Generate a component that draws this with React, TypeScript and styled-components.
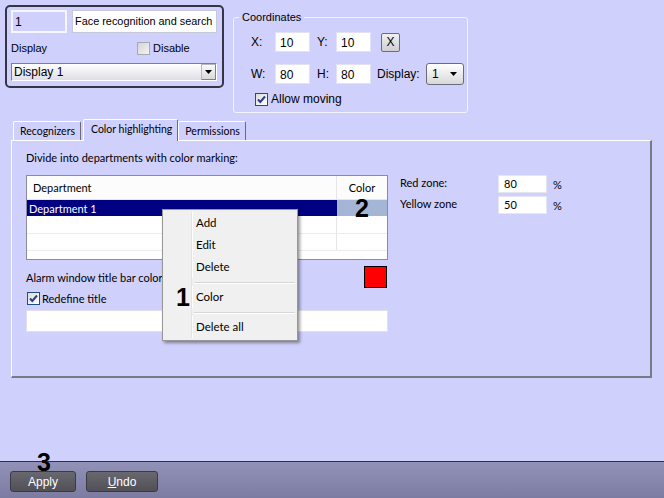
import React from 'react';
import styled, { createGlobalStyle } from 'styled-components';

const classic = `"Liberation Sans", Arial, sans-serif`;
const ui = `Lato, "Open Sans", sans-serif`;

const GlobalStyle = createGlobalStyle`
  html, body {
    margin: 0;
    padding: 0;
  }
  body {
    background: #d0d0fc;
    font-family: ${classic};
    font-size: 11px;
    color: #000;
  }
`;

const Check = ({ checked, disabled }: { checked?: boolean; disabled?: boolean }) => (
  <CheckBox $disabled={disabled}>
    {checked && (
      <svg width="11" height="11" viewBox="0 0 11 11">
        <path d="M2 5.5 L4.3 8 L9 2.5" fill="none" stroke="#2a3f8c" strokeWidth="2" />
      </svg>
    )}
  </CheckBox>
);

const Triangle = () => (
  <svg width="7" height="4" viewBox="0 0 7 4">
    <path d="M0 0 H7 L3.5 4 Z" fill="#000" />
  </svg>
);

const App = () => (
  <>
    <GlobalStyle />
    <Page>
      <Main>
        <TopRow>
          <ObjectPanel>
            <FieldRow>
              <IdField>1</IdField>
              <NameField>Face recognition and search 1</NameField>
            </FieldRow>
            <DisplayRow>
              <DisplayLabel>Display</DisplayLabel>
              <CheckRow>
                <Check disabled />
                <span>Disable</span>
              </CheckRow>
            </DisplayRow>
            <DisplaySelect>
              <span>Display 1</span>
              <ArrowButton>
                <Triangle />
              </ArrowButton>
            </DisplaySelect>
          </ObjectPanel>

          <Coordinates>
            <Legend>Coordinates</Legend>
            <CoordRow>
              <CoordLabel $w={24}>X:</CoordLabel>
              <NumField>10</NumField>
              <CoordLabel $w={26} $pl={7}>Y:</CoordLabel>
              <NumField>10</NumField>
              <ResetButton>X</ResetButton>
            </CoordRow>
            <CoordRow $mt={10}>
              <CoordLabel $w={24}>W:</CoordLabel>
              <NumField>80</NumField>
              <CoordLabel $w={26} $pl={7}>H:</CoordLabel>
              <NumField>80</NumField>
              <CoordLabel $w={55} $pl={6}>Display:</CoordLabel>
              <SmallSelect>
                <span>1</span>
                <Triangle />
              </SmallSelect>
            </CoordRow>
            <MovingRow>
              <Check checked />
              <span>Allow moving</span>
            </MovingRow>
          </Coordinates>
        </TopRow>

        <TabStrip>
          <Tab>Recognizers</Tab>
          <Tab $active>Color highlighting</Tab>
          <Tab>Permissions</Tab>
        </TabStrip>

        <TabPanel>
          <LeftColumn>
            <Caption>Divide into departments with color marking:</Caption>
            <Table>
              <HeaderRow>
                <DeptCell>Department</DeptCell>
                <ColorCell>Color</ColorCell>
              </HeaderRow>
              <DataRow $selected>
                <DeptCell $selected>Department 1</DeptCell>
                <ColorCell $swatch>
                  <Callout>2</Callout>
                </ColorCell>
              </DataRow>
              <DataRow>
                <DeptCell />
                <ColorCell />
              </DataRow>
              <DataRow>
                <DeptCell />
                <ColorCell />
              </DataRow>
            </Table>
            <AlarmRow>
              <span>Alarm window title bar color:</span>
              <Swatch />
            </AlarmRow>
            <RedefineRow>
              <Check checked />
              <span>Redefine title</span>
            </RedefineRow>
            <TitleField />
          </LeftColumn>

          <ZoneColumn>
            <ZoneRow>
              <ZoneLabel>Red zone:</ZoneLabel>
              <ZoneField>80</ZoneField>
              <Percent>%</Percent>
            </ZoneRow>
            <ZoneRow>
              <ZoneLabel>Yellow zone</ZoneLabel>
              <ZoneField>50</ZoneField>
              <Percent>%</Percent>
            </ZoneRow>
          </ZoneColumn>
        </TabPanel>
      </Main>

      <BottomBar>
        <BarButton $w={66}>Apply</BarButton>
        <BarButton $w={72}>
          <u>U</u>ndo
        </BarButton>
      </BottomBar>

      <ContextMenu>
        <MenuItem>
          <Gutter />
          <span>Add</span>
        </MenuItem>
        <MenuItem>
          <Gutter />
          <span>Edit</span>
        </MenuItem>
        <MenuItem>
          <Gutter />
          <span>Delete</span>
        </MenuItem>
        <MenuSeparator />
        <MenuItem>
          <Gutter>
            <Callout>1</Callout>
          </Gutter>
          <span>Color</span>
        </MenuItem>
        <MenuSeparator />
        <MenuItem>
          <Gutter />
          <span>Delete all</span>
        </MenuItem>
      </ContextMenu>

      <StepMark>3</StepMark>
    </Page>
  </>
);

const Page = styled.div`
  position: relative;
  width: 664px;
  height: 498px;
  display: flex;
  flex-direction: column;
  overflow: hidden;
`;

const Main = styled.div`
  flex: 1;
`;

const TopRow = styled.div`
  display: flex;
  align-items: flex-start;
  gap: 9px;
  padding: 5px 0 0 5px;
`;

const ObjectPanel = styled.div`
  box-sizing: border-box;
  width: 219px;
  height: 83px;
  border: 2px solid #353545;
  border-radius: 5px;
  padding: 3px 5px 0 4px;
`;

const FieldRow = styled.div`
  display: flex;
  gap: 5px;
`;

const IdField = styled.div`
  box-sizing: border-box;
  width: 56px;
  height: 23px;
  border: 2px solid #f6f6ff;
  padding: 3px 2px;
  font-size: 12px;
`;

const NameField = styled.div`
  box-sizing: border-box;
  width: 145px;
  height: 23px;
  background: #fff;
  border: 1px solid #c8c8dc;
  padding: 4px 2px;
  font-size: 10.9px;
  white-space: nowrap;
  overflow: hidden;
`;

const DisplayRow = styled.div`
  display: flex;
  align-items: center;
  height: 30px;
`;

const DisplayLabel = styled.span`
  width: 126px;
`;

const CheckRow = styled.label`
  display: flex;
  align-items: center;
  gap: 3px;
`;

const CheckBox = styled.span<{ $disabled?: boolean }>`
  box-sizing: border-box;
  width: 13px;
  height: 13px;
  display: inline-flex;
  align-items: center;
  justify-content: center;
  border: 1px solid ${(p) => (p.$disabled ? '#a8a8b0' : '#1c5180')};
  background: ${(p) =>
    p.$disabled
      ? 'linear-gradient(135deg, #d4d4d8, #f4f4f4)'
      : 'linear-gradient(135deg, #dcdcd7, #ffffff)'};
`;

const DisplaySelect = styled.div`
  box-sizing: border-box;
  width: 206px;
  height: 18px;
  display: flex;
  align-items: center;
  justify-content: space-between;
  padding-left: 2px;
  border-top: 1px solid #808080;
  border-left: 1px solid #808080;
  border-right: 1px solid #fff;
  border-bottom: 1px solid #fff;
  background: linear-gradient(#ffffff, #dedee6);
  font-size: 12px;
`;

const ArrowButton = styled.span`
  box-sizing: border-box;
  width: 15px;
  height: 16px;
  display: flex;
  align-items: center;
  justify-content: center;
  border: 1px solid #b8b8c0;
  border-right-color: #808088;
  border-bottom-color: #808088;
  background: linear-gradient(#fafafa, #d8d8dc);
`;

const Coordinates = styled.fieldset`
  box-sizing: border-box;
  width: 235px;
  height: 102px;
  margin: 6px 0 0;
  padding: 8px 0 0 17px;
  border: 1px solid #f4f4ff;
  border-radius: 3px;
`;

const Legend = styled.legend`
  margin-left: -12px;
  padding: 0 3px;
  font-size: 11px;
`;

const CoordRow = styled.div<{ $mt?: number }>`
  display: flex;
  align-items: center;
  height: 22px;
  margin-top: ${(p) => p.$mt ?? 0}px;
`;

const CoordLabel = styled.span<{ $w: number; $pl?: number }>`
  box-sizing: border-box;
  width: ${(p) => p.$w}px;
  padding-left: ${(p) => p.$pl ?? 0}px;
  font-size: 12px;
`;

const NumField = styled.div`
  box-sizing: border-box;
  width: 35px;
  height: 20px;
  background: #fff;
  border: 1px solid #e2e2f4;
  padding: 3px 4px;
  font-size: 12px;
`;

const ResetButton = styled.div`
  box-sizing: border-box;
  width: 19px;
  height: 19px;
  margin-left: 10px;
  display: flex;
  align-items: center;
  justify-content: center;
  border: 1px solid #6c6c78;
  border-radius: 2px;
  background: linear-gradient(#f0f0f0, #cfcfd4);
  font-size: 12px;
`;

const SmallSelect = styled.div`
  box-sizing: border-box;
  width: 38px;
  height: 22px;
  display: flex;
  align-items: center;
  justify-content: space-between;
  padding: 0 6px 0 5px;
  border: 1px solid #6c6c78;
  border-radius: 3px;
  background: linear-gradient(#ffffff, #d8d8dc);
  font-size: 12px;
`;

const MovingRow = styled.label`
  display: flex;
  align-items: center;
  gap: 3px;
  height: 16px;
  margin: 6px 0 0 4px;
  font-size: 12px;
`;

const TabStrip = styled.div`
  display: flex;
  align-items: flex-end;
  height: 21px;
  margin: 6px 0 0 11px;
  padding-left: 2px;
  position: relative;
  z-index: 1;
`;

const Tab = styled.div<{ $active?: boolean }>`
  box-sizing: border-box;
  height: ${(p) => (p.$active ? 22 : 19)}px;
  margin: ${(p) => (p.$active ? '0 0 -1px 2px' : '0')};
  padding: ${(p) => (p.$active ? '2px 5px 0 7px' : '2px 5px 0 6px')};
  border-top: 1px solid #fff;
  border-left: 1px solid #fff;
  border-right: 1px solid #6a6a78;
  border-radius: 2px 2px 0 0;
  background: #d0d0fc;
  font-family: ${ui};
  font-size: 10.5px;
  line-height: 15px;
  white-space: nowrap;
`;

const TabPanel = styled.div`
  box-sizing: border-box;
  display: flex;
  width: 641px;
  height: 238px;
  margin-left: 11px;
  padding: 9px 0 0 14px;
  border-top: 1px solid #fff;
  border-left: 1px solid #fff;
  border-right: 2px solid #7a7a86;
  border-bottom: 2px solid #7a7a86;
  font-family: ${ui};
  font-size: 11px;
`;

const LeftColumn = styled.div`
  width: 362px;
  display: flex;
  flex-direction: column;
`;

const Caption = styled.div`
  line-height: 15px;
  margin-bottom: 10px;
`;

const Table = styled.div`
  box-sizing: border-box;
  height: 85px;
  background: #fff;
  border: 1px solid #8a8aa0;
`;

const HeaderRow = styled.div`
  display: flex;
  height: 24px;
  box-sizing: border-box;
  border-bottom: 1px solid #e6e6ea;
  background: #fcfcfc;
`;

const DataRow = styled.div<{ $selected?: boolean }>`
  display: flex;
  height: 17px;
  box-sizing: border-box;
  border-bottom: 1px solid ${(p) => (p.$selected ? 'transparent' : '#ececee')};
`;

const DeptCell = styled.div<{ $selected?: boolean }>`
  box-sizing: border-box;
  width: 310px;
  display: flex;
  align-items: center;
  padding-left: ${(p) => (p.$selected ? 2 : 6)}px;
  border-right: 1px solid ${(p) => (p.$selected ? '#000080' : '#e6e6ea')};
  background: ${(p) => (p.$selected ? '#000080' : 'transparent')};
  color: ${(p) => (p.$selected ? '#fff' : '#000')};
`;

const ColorCell = styled.div<{ $swatch?: boolean }>`
  flex: 1;
  display: flex;
  align-items: center;
  justify-content: center;
  background: ${(p) => (p.$swatch ? '#a5b5d5' : 'transparent')};
`;

const Callout = styled.span`
  font-family: ${classic};
  font-weight: bold;
  font-size: 25px;
  line-height: 1;
  color: #000;
`;

const AlarmRow = styled.div`
  display: flex;
  align-items: center;
  justify-content: space-between;
  height: 22px;
  margin-top: 6px;
  padding-right: 1px;
`;

const Swatch = styled.div`
  box-sizing: border-box;
  width: 23px;
  height: 22px;
  background: #ff0000;
  border: 1px solid #000;
`;

const RedefineRow = styled.label`
  display: flex;
  align-items: center;
  gap: 2px;
  height: 14px;
  margin: 3px 0 0 1px;
`;

const TitleField = styled.div`
  box-sizing: border-box;
  height: 22px;
  margin-top: 5px;
  background: #fff;
  border: 1px solid #e0e0ee;
`;

const ZoneColumn = styled.div`
  margin: 25px 0 0 12px;
  display: flex;
  flex-direction: column;
  gap: 3px;
`;

const ZoneRow = styled.div`
  display: flex;
  align-items: center;
  height: 18px;
`;

const ZoneLabel = styled.span`
  width: 98px;
  padding-bottom: 4px;
`;

const ZoneField = styled.div`
  box-sizing: border-box;
  width: 49px;
  height: 18px;
  padding: 1px 5px;
  background: #fff;
  border: 1px solid #e6e6f2;
`;

const Percent = styled.span`
  margin-left: 6px;
`;

const BottomBar = styled.div`
  box-sizing: border-box;
  height: 37px;
  display: flex;
  align-items: flex-start;
  gap: 10px;
  padding: 9px 0 0 10px;
  border-top: 1px solid #2e2e48;
  background: linear-gradient(#9292b8, #7c7ca2);
`;

const BarButton = styled.div<{ $w: number }>`
  box-sizing: border-box;
  width: ${(p) => p.$w}px;
  height: 21px;
  display: flex;
  align-items: center;
  justify-content: center;
  border: 1px solid #3a3a44;
  border-radius: 3px;
  background: linear-gradient(#68686e, #505056);
  color: #fff;
  font-size: 12px;
`;

const ContextMenu = styled.div`
  position: absolute;
  left: 162px;
  top: 209px;
  box-sizing: border-box;
  width: 136px;
  height: 132px;
  padding: 2px;
  background: #f0f0f0;
  border: 1px solid #979797;
  box-shadow: 2px 2px 3px rgba(0, 0, 0, 0.4);
  font-family: ${ui};
  font-size: 11.5px;
  z-index: 5;
`;

const MenuItem = styled.div`
  display: flex;
  align-items: center;
  gap: 4px;
  height: 22px;
  padding-bottom: 2px;
  box-sizing: border-box;
`;

const Gutter = styled.div`
  box-sizing: border-box;
  width: 27px;
  height: 22px;
  margin-bottom: -2px;
  display: flex;
  align-items: center;
  justify-content: flex-end;
  padding-right: 1px;
  border-right: 1px solid #e2e3e3;
  box-shadow: 1px 0 0 #fff;
`;

const MenuSeparator = styled.div`
  height: 8px;
  margin-left: 26px;
  display: flex;
  flex-direction: column;
  justify-content: center;
  border-left: 1px solid #e2e3e3;
  &::after {
    content: '';
    display: block;
    height: 1px;
    margin-left: 2px;
    background: #d7d7d7;
    box-shadow: 0 1px 0 #fff;
  }
`;

const StepMark = styled.span`
  position: absolute;
  left: 37px;
  top: 450px;
  font-family: ${classic};
  font-weight: bold;
  font-size: 25px;
  line-height: 1;
  color: #000;
`;

export default App;
